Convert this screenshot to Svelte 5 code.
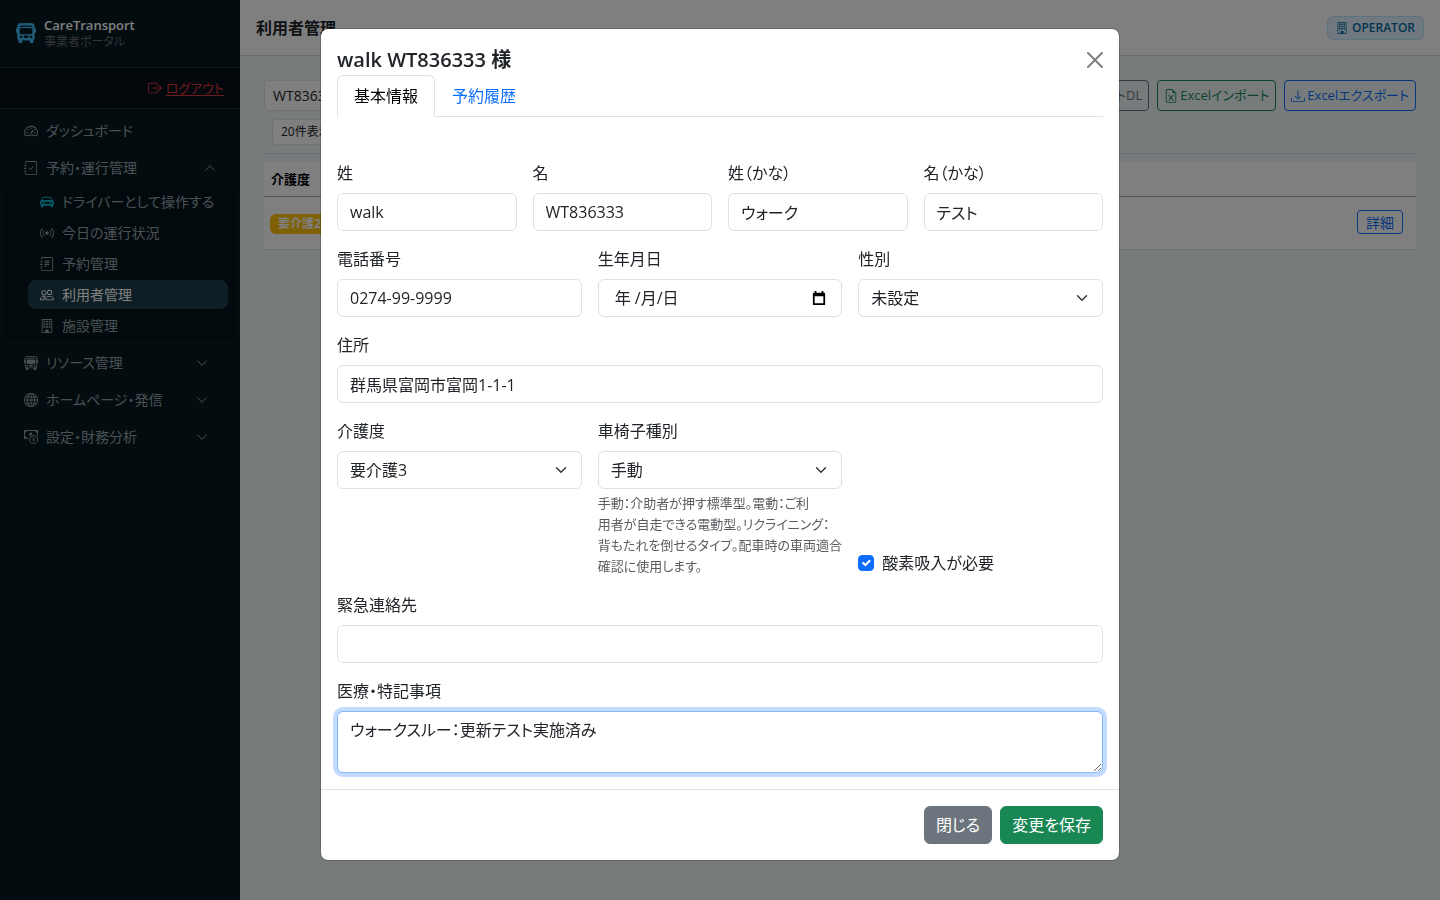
<script lang="ts">
    import { onMount } from 'svelte';

    const journal = [
        'M3 0h10a2 2 0 0 1 2 2v12a2 2 0 0 1-2 2H3a2 2 0 0 1-2-2v-1h1v1a1 1 0 0 0 1 1h10a1 1 0 0 0 1-1V2a1 1 0 0 0-1-1H3a1 1 0 0 0-1 1v1H1V2a2 2 0 0 1 2-2',
        'M1 5v-.5a.5.5 0 0 1 1 0V5h.5a.5.5 0 0 1 0 1h-2a.5.5 0 0 1 0-1zm0 3v-.5a.5.5 0 0 1 1 0V8h.5a.5.5 0 0 1 0 1h-2a.5.5 0 0 1 0-1zm0 3v-.5a.5.5 0 0 1 1 0v.5h.5a.5.5 0 0 1 0 1h-2a.5.5 0 0 1 0-1z'
    ];

    const icons: Record<string, string[]> = {
        busFill: ['M16 7a1 1 0 0 1-1 1v3.5c0 .818-.393 1.544-1 2v2a.5.5 0 0 1-.5.5h-2a.5.5 0 0 1-.5-.5V14H5v1.5a.5.5 0 0 1-.5.5h-2a.5.5 0 0 1-.5-.5v-2a2.5 2.5 0 0 1-1-2V8a1 1 0 0 1-1-1V5a1 1 0 0 1 1-1V2.64C1 1.452 1.845.408 3.064.268A44 44 0 0 1 8 0c2.1 0 3.792.136 4.936.268C14.155.408 15 1.452 15 2.64V4a1 1 0 0 1 1 1zM3.552 3.22A43 43 0 0 1 8 3c1.837 0 3.353.107 4.448.22a.5.5 0 0 0 .104-.994A44 44 0 0 0 8 2c-1.876 0-3.426.109-4.552.226a.5.5 0 1 0 .104.994M8 4c-1.876 0-3.426.109-4.552.226A.5.5 0 0 0 3 4.723v3.554a.5.5 0 0 0 .448.497C4.574 8.891 6.124 9 8 9s3.426-.109 4.552-.226A.5.5 0 0 0 13 8.277V4.723a.5.5 0 0 0-.448-.497A44 44 0 0 0 8 4m-3 7a1 1 0 1 0-2 0 1 1 0 0 0 2 0m8 0a1 1 0 1 0-2 0 1 1 0 0 0 2 0m-7 0a1 1 0 0 0 1 1h2a1 1 0 1 0 0-2H7a1 1 0 0 0-1 1'],
        bus: [
            'M5 11a1 1 0 1 1-2 0 1 1 0 0 1 2 0m8 0a1 1 0 1 1-2 0 1 1 0 0 1 2 0m-6-1a1 1 0 1 0 0 2h2a1 1 0 1 0 0-2zm1-6c-1.876 0-3.426.109-4.552.226A.5.5 0 0 0 3 4.723v3.554a.5.5 0 0 0 .448.497C4.574 8.891 6.124 9 8 9s3.426-.109 4.552-.226A.5.5 0 0 0 13 8.277V4.723a.5.5 0 0 0-.448-.497A44 44 0 0 0 8 4m0-1c-1.837 0-3.353.107-4.448.22a.5.5 0 1 1-.104-.994A44 44 0 0 1 8 2c1.876 0 3.426.109 4.552.226a.5.5 0 1 1-.104.994A43 43 0 0 0 8 3',
            'M15 8a1 1 0 0 0 1-1V5a1 1 0 0 0-1-1V2.64c0-1.188-.845-2.232-2.064-2.372A44 44 0 0 0 8 0C5.9 0 4.208.136 3.064.268 1.845.408 1 1.452 1 2.64V4a1 1 0 0 0-1 1v2a1 1 0 0 0 1 1v3.5c0 .818.393 1.544 1 2v2a.5.5 0 0 0 .5.5h2a.5.5 0 0 0 .5-.5V14h6v1.5a.5.5 0 0 0 .5.5h2a.5.5 0 0 0 .5-.5v-2c.607-.456 1-1.182 1-2zM8 1c2.056 0 3.71.134 4.822.261.676.078 1.178.66 1.178 1.379v8.86a1.5 1.5 0 0 1-1.5 1.5h-9A1.5 1.5 0 0 1 2 11.5V2.64c0-.72.502-1.301 1.178-1.379A43 43 0 0 1 8 1'
        ],
        logout: [
            'M10 12.5a.5.5 0 0 1-.5.5h-8a.5.5 0 0 1-.5-.5v-9a.5.5 0 0 1 .5-.5h8a.5.5 0 0 1 .5.5v2a.5.5 0 0 0 1 0v-2A1.5 1.5 0 0 0 9.5 2h-8A1.5 1.5 0 0 0 0 3.5v9A1.5 1.5 0 0 0 1.5 14h8a1.5 1.5 0 0 0 1.5-1.5v-2a.5.5 0 0 0-1 0z',
            'M15.854 8.354a.5.5 0 0 0 0-.708l-3-3a.5.5 0 0 0-.708.708L14.293 7.5H5.5a.5.5 0 0 0 0 1h8.793l-2.147 2.146a.5.5 0 0 0 .708.708z'
        ],
        speed: [
            'M8 4a.5.5 0 0 1 .5.5V6a.5.5 0 0 1-1 0V4.5A.5.5 0 0 1 8 4M3.732 5.732a.5.5 0 0 1 .707 0l.915.914a.5.5 0 1 1-.708.708l-.914-.915a.5.5 0 0 1 0-.707M2 10a.5.5 0 0 1 .5-.5h1.586a.5.5 0 0 1 0 1H2.5A.5.5 0 0 1 2 10m9.5 0a.5.5 0 0 1 .5-.5h1.5a.5.5 0 0 1 0 1H12a.5.5 0 0 1-.5-.5m.754-4.246a.39.39 0 0 0-.527-.02L7.547 9.31a.91.91 0 1 0 1.302 1.258l3.434-4.297a.39.39 0 0 0-.029-.518z',
            'M0 10a8 8 0 1 1 15.547 2.661c-.442 1.253-1.845 1.602-2.932 1.25C11.309 13.488 9.475 13 8 13c-1.474 0-3.31.488-4.615.911-1.087.352-2.49.003-2.932-1.25A8 8 0 0 1 0 10m8-7a7 7 0 0 0-6.603 9.329c.203.575.923.876 1.68.63C4.397 12.533 6.358 12 8 12s3.604.532 4.923.96c.757.245 1.477-.056 1.68-.631A7 7 0 0 0 8 3'
        ],
        journalCheck: [...journal, 'M10.854 6.146a.5.5 0 0 1 0 .708l-3 3a.5.5 0 0 1-.708 0l-1.5-1.5a.5.5 0 1 1 .708-.708L7.5 8.793l2.646-2.647a.5.5 0 0 1 .708 0'],
        journalText: [...journal, 'M5 10.5a.5.5 0 0 1 .5-.5h2a.5.5 0 0 1 0 1h-2a.5.5 0 0 1-.5-.5m0-2a.5.5 0 0 1 .5-.5h5a.5.5 0 0 1 0 1h-5a.5.5 0 0 1-.5-.5m0-2a.5.5 0 0 1 .5-.5h5a.5.5 0 0 1 0 1h-5a.5.5 0 0 1-.5-.5m0-2a.5.5 0 0 1 .5-.5h5a.5.5 0 0 1 0 1h-5a.5.5 0 0 1-.5-.5'],
        car: ['M2.52 3.515A2.5 2.5 0 0 1 4.82 2h6.362c1 0 1.904.596 2.298 1.515l.792 1.848c.075.175.21.319.38.404.5.25.855.715.965 1.262l.335 1.679q.05.242.049.49v.413c0 .814-.39 1.543-1 1.997V13.5a.5.5 0 0 1-.5.5h-2a.5.5 0 0 1-.5-.5v-1.338c-1.292.048-2.745.088-4 .088s-2.708-.04-4-.088V13.5a.5.5 0 0 1-.5.5h-2a.5.5 0 0 1-.5-.5v-1.892c-.61-.454-1-1.183-1-1.997v-.413a2.5 2.5 0 0 1 .049-.49l.335-1.68c.11-.546.465-1.012.964-1.261a.8.8 0 0 0 .381-.404l.792-1.848ZM3 10a1 1 0 1 0 0-2 1 1 0 0 0 0 2m10 0a1 1 0 1 0 0-2 1 1 0 0 0 0 2M6 8a1 1 0 0 0 0 2h4a1 1 0 1 0 0-2zM2.906 5.189a.51.51 0 0 0 .497.731c.91-.073 3.35-.17 4.597-.17s3.688.097 4.597.17a.51.51 0 0 0 .497-.731l-.956-1.913A.5.5 0 0 0 11.691 3H4.309a.5.5 0 0 0-.447.276L2.906 5.19Z'],
        broadcast: ['M3.05 3.05a7 7 0 0 0 0 9.9.5.5 0 0 1-.707.707 8 8 0 0 1 0-11.314.5.5 0 0 1 .707.707m2.122 2.122a4 4 0 0 0 0 5.656.5.5 0 1 1-.708.708 5 5 0 0 1 0-7.072.5.5 0 0 1 .708.708m5.656-.708a.5.5 0 0 1 .708 0 5 5 0 0 1 0 7.072.5.5 0 1 1-.708-.708 4 4 0 0 0 0-5.656.5.5 0 0 1 0-.708m2.122-2.12a.5.5 0 0 1 .707 0 8 8 0 0 1 0 11.313.5.5 0 0 1-.707-.707 7 7 0 0 0 0-9.9.5.5 0 0 1 0-.707zM10 8a2 2 0 1 1-4 0 2 2 0 0 1 4 0'],
        people: ['M15 14s1 0 1-1-1-4-5-4-5 3-5 4 1 1 1 1zm-7.978-1L7 12.996c.001-.264.167-1.03.76-1.72C8.312 10.629 9.282 10 11 10c1.717 0 2.687.63 3.24 1.276.593.69.758 1.457.76 1.72l-.008.002-.014.002zM11 7a2 2 0 1 0 0-4 2 2 0 0 0 0 4m3-2a3 3 0 1 1-6 0 3 3 0 0 1 6 0M6.936 9.28a6 6 0 0 0-1.23-.247A7 7 0 0 0 5 9c-4 0-5 3-5 4q0 1 1 1h4.216A2.24 2.24 0 0 1 5 13c0-1.01.377-2.042 1.09-2.904.243-.294.526-.569.846-.816M4.92 10A5.5 5.5 0 0 0 4 13H1c0-.26.164-1.03.76-1.724.545-.636 1.492-1.256 3.16-1.275ZM1.5 5.5a3 3 0 1 1 6 0 3 3 0 0 1-6 0m3-2a2 2 0 1 0 0 4 2 2 0 0 0 0-4'],
        building: [
            'M4 2h2v2H4zM7 2h2v2H7zM10 2h2v2h-2zM4 5h2v2H4zM7 5h2v2H7zM10 5h2v2h-2zM4 8h2v2H4zM7 8h2v2H7zM10 8h2v2h-2z',
            'M2 1a1 1 0 0 1 1-1h10a1 1 0 0 1 1 1v14a1 1 0 0 1-1 1H3a1 1 0 0 1-1-1zm11 0H3v14h3v-2.5a.5.5 0 0 1 .5-.5h3a.5.5 0 0 1 .5.5V15h3z'
        ],
        globe: ['M0 8a8 8 0 1 1 16 0A8 8 0 0 1 0 8m7.5-6.923c-.67.204-1.335.82-1.887 1.855A8 8 0 0 0 5.145 4H7.5zM4.09 4a9.3 9.3 0 0 1 .64-1.539 7 7 0 0 1 .597-.933A7.03 7.03 0 0 0 2.255 4zm-.582 3.5c.03-.877.138-1.718.312-2.5H1.674a7 7 0 0 0-.656 2.5zM4.847 5a12.5 12.5 0 0 0-.338 2.5H7.5V5zM8.5 5v2.5h2.99a12.5 12.5 0 0 0-.337-2.5zM4.51 8.5a12.5 12.5 0 0 0 .337 2.5H7.5V8.5zm3.99 0V11h2.653c.187-.765.306-1.608.338-2.5zM5.145 12q.208.58.468 1.068c.552 1.035 1.218 1.65 1.887 1.855V12zm.182 2.472a7 7 0 0 1-.597-.933A9.3 9.3 0 0 1 4.09 12H2.255a7 7 0 0 0 3.072 2.472M3.82 11a13.7 13.7 0 0 1-.312-2.5h-2.49c.062.89.291 1.733.656 2.5zm6.853 3.472A7 7 0 0 0 13.745 12H11.91a9.3 9.3 0 0 1-.64 1.539 7 7 0 0 1-.597.933M8.5 12v2.923c.67-.204 1.335-.82 1.887-1.855q.26-.487.468-1.068zm3.68-1h2.146c.365-.767.594-1.61.656-2.5h-2.49a13.7 13.7 0 0 1-.312 2.5m2.802-3.5a7 7 0 0 0-.656-2.5H12.18c.174.782.282 1.623.312 2.5zM11.27 2.461c.247.464.462.98.64 1.539h1.835a7 7 0 0 0-3.072-2.472c.218.284.418.598.597.933M10.855 4a8 8 0 0 0-.468-1.068C9.835 1.897 9.17 1.282 8.5 1.077V4z'],
        cash: [
            'M11 15a4 4 0 1 0 0-8 4 4 0 0 0 0 8m5-4a5 5 0 1 1-10 0 5 5 0 0 1 10 0',
            'M9.438 11.944c.047.596.518 1.06 1.363 1.116v.44h.375v-.443c.875-.061 1.386-.529 1.386-1.207 0-.618-.39-.936-1.09-1.1l-.296-.07v-1.2c.376.043.614.248.671.532h.658c-.047-.575-.54-1.024-1.329-1.073V8.5h-.375v.45c-.747.073-1.255.522-1.255 1.158 0 .562.378.92 1.007 1.066l.248.061v1.272c-.384-.058-.639-.27-.696-.563h-.668zm1.36-1.354c-.369-.085-.569-.26-.569-.522 0-.294.216-.514.572-.578v1.1zm.432.746c.449.104.655.272.655.569 0 .339-.257.571-.709.614v-1.195z',
            'M1 0a1 1 0 0 0-1 1v8a1 1 0 0 0 1 1h4.083q.088-.517.258-1H3a2 2 0 0 0-2-2V3a2 2 0 0 0 2-2h10a2 2 0 0 0 2 2v3.528c.38.34.717.728 1 1.154V1a1 1 0 0 0-1-1z',
            'M9.998 5.083 10 5a2 2 0 1 0-3.132 1.65 6 6 0 0 1 3.13-1.567'
        ],
        up: ['M7.646 4.646a.5.5 0 0 1 .708 0l6 6a.5.5 0 0 1-.708.708L8 5.707l-5.646 5.647a.5.5 0 0 1-.708-.708z'],
        down: ['M1.646 4.646a.5.5 0 0 1 .708 0L8 10.293l5.646-5.647a.5.5 0 0 1 .708.708l-6 6a.5.5 0 0 1-.708 0l-6-6a.5.5 0 0 1 0-.708'],
        excel: [
            'M5.884 6.68a.5.5 0 1 0-.768.64L7.349 10l-2.233 2.68a.5.5 0 0 0 .768.64L8 10.781l2.116 2.54a.5.5 0 0 0 .768-.641L8.651 10l2.233-2.68a.5.5 0 0 0-.768-.64L8 9.219l-2.116-2.54z',
            'M14 14V4.5L9.5 0H4a2 2 0 0 0-2 2v12a2 2 0 0 0 2 2h8a2 2 0 0 0 2-2M9.5 3A1.5 1.5 0 0 0 11 4.5h2V14a1 1 0 0 1-1 1H4a1 1 0 0 1-1-1V2a1 1 0 0 1 1-1h5.5z'
        ],
        download: [
            'M.5 9.9a.5.5 0 0 1 .5.5v2.5a1 1 0 0 0 1 1h12a1 1 0 0 0 1-1v-2.5a.5.5 0 0 1 1 0v2.5a2 2 0 0 1-2 2H2a2 2 0 0 1-2-2v-2.5a.5.5 0 0 1 .5-.5',
            'M7.646 11.854a.5.5 0 0 0 .708 0l3-3a.5.5 0 0 0-.708-.708L8.5 10.293V1.5a.5.5 0 0 0-1 0v8.793L5.354 8.146a.5.5 0 1 0-.708.708z'
        ],
        close: ['M.293.293a1 1 0 0 1 1.414 0L8 6.586 14.293.293a1 1 0 1 1 1.414 1.414L9.414 8l6.293 6.293a1 1 0 0 1-1.414 1.414L8 9.414l-6.293 6.293a1 1 0 0 1-1.414-1.414L6.586 8 .293 1.707a1 1 0 0 1 0-1.414'],
        calendar: ['M3 0h2v2h6V0h2v2h1a1 1 0 0 1 1 1v12a1 1 0 0 1-1 1H2a1 1 0 0 1-1-1V3a1 1 0 0 1 1-1h1zM3 6v8h10V6z']
    };

    const subItems = [
        { icon: 'car', label: 'ドライバーとして操作する', accent: true },
        { icon: 'broadcast', label: '今日の運行状況' },
        { icon: 'journalText', label: '予約管理' },
        { icon: 'people', label: '利用者管理', active: true },
        { icon: 'building', label: '施設管理' }
    ];

    const groups = [
        { icon: 'bus', label: 'リソース管理' },
        { icon: 'globe', label: 'ホームページ・発信' },
        { icon: 'cash', label: '設定・財務分析' }
    ];

    let user = $state({
        lastName: 'walk',
        firstName: 'WT836333',
        lastKana: 'ウォーク',
        firstKana: 'テスト',
        phone: '0274-99-9999',
        birthday: '',
        gender: '未設定',
        address: '群馬県富岡市富岡1-1-1',
        careLevel: '要介護3',
        wheelchair: '手動',
        oxygen: true,
        emergency: '',
        notes: 'ウォークスルー：更新テスト実施済み'
    });

    let search = $state('WT836333');
    let open = $state(true);
    let tab = $state('info');
    let notesField: HTMLTextAreaElement;

    onMount(() => notesField.focus());
</script>

{#snippet icon(name: string, size = 14)}
    <svg class="icon" width={size} height={size} viewBox="0 0 16 16" fill="currentColor" fill-rule="evenodd" aria-hidden="true">
        {#each icons[name] as d}
            <path {d} />
        {/each}
    </svg>
{/snippet}

<div class="app">
    <aside class="sidebar">
        <div class="brand">
            {@render icon('busFill', 20)}
            <div>
                <div class="name">CareTransport</div>
                <div class="portal">事業者ポータル</div>
            </div>
        </div>
        <div class="logout">
            {@render icon('logout')}
            <a href="#logout">ログアウト</a>
        </div>
        <nav>
            <a class="item" href="#dashboard">{@render icon('speed')}<span>ダッシュボード</span></a>
            <button class="item opened">
                {@render icon('journalCheck')}<span>予約・運行管理</span>{@render icon('up', 12)}
            </button>
            <div class="sub">
                {#each subItems as item}
                    <a href="#sub" class:active={item.active} class:accent={item.accent}>
                        {@render icon(item.icon)}<span>{item.label}</span>
                    </a>
                {/each}
            </div>
            {#each groups as group}
                <button class="item">
                    {@render icon(group.icon)}<span>{group.label}</span>{@render icon('down', 12)}
                </button>
            {/each}
        </nav>
    </aside>

    <div class="page">
        <header class="topbar">
            <h1>利用者管理</h1>
            <span class="role">{@render icon('building', 12)}OPERATOR</span>
        </header>
        <main>
            <div class="tools">
                <input class="search" aria-label="検索" bind:value={search} />
                <div class="actions">
                    <button class="outline grey">テンプレートDL</button>
                    <button class="outline green">{@render icon('excel')}Excelインポート</button>
                    <button class="outline blue">{@render icon('download')}Excelエクスポート</button>
                </div>
            </div>
            <div class="paging">
                <select aria-label="表示件数">
                    <option>20件表示</option>
                </select>
            </div>
            <table>
                <thead>
                    <tr><th>介護度</th><th></th></tr>
                </thead>
                <tbody>
                    <tr>
                        <td><span class="level">要介護2</span></td>
                        <td class="end"><button class="outline blue small">詳細</button></td>
                    </tr>
                </tbody>
            </table>
        </main>
    </div>
</div>

{#if open}
    <div class="backdrop">
        <div class="modal" role="dialog" aria-labelledby="modal-title">
            <div class="head">
                <h2 id="modal-title">walk WT836333 様</h2>
                <button class="close" aria-label="閉じる" onclick={() => (open = false)}>{@render icon('close', 16)}</button>
            </div>
            <div class="tabs">
                <button class:current={tab === 'info'} onclick={() => (tab = 'info')}>基本情報</button>
                <button class:current={tab === 'history'} onclick={() => (tab = 'history')}>予約履歴</button>
            </div>
            <form class="body">
                <div class="row four">
                    <div class="field">
                        <label for="last-name">姓</label>
                        <input id="last-name" bind:value={user.lastName} />
                    </div>
                    <div class="field">
                        <label for="first-name">名</label>
                        <input id="first-name" bind:value={user.firstName} />
                    </div>
                    <div class="field">
                        <label for="last-kana">姓（かな）</label>
                        <input id="last-kana" bind:value={user.lastKana} />
                    </div>
                    <div class="field">
                        <label for="first-kana">名（かな）</label>
                        <input id="first-kana" bind:value={user.firstKana} />
                    </div>
                </div>
                <div class="row three">
                    <div class="field">
                        <label for="phone">電話番号</label>
                        <input id="phone" type="tel" bind:value={user.phone} />
                    </div>
                    <div class="field">
                        <label for="birthday">生年月日</label>
                        <div class="date">
                            <input id="birthday" placeholder="年 /月/日" bind:value={user.birthday} />
                            <button type="button" aria-label="カレンダー">{@render icon('calendar', 14)}</button>
                        </div>
                    </div>
                    <div class="field">
                        <label for="gender">性別</label>
                        <select id="gender" bind:value={user.gender}>
                            <option>未設定</option>
                            <option>男性</option>
                            <option>女性</option>
                        </select>
                    </div>
                </div>
                <div class="field">
                    <label for="address">住所</label>
                    <input id="address" bind:value={user.address} />
                </div>
                <div class="row three">
                    <div class="field">
                        <label for="care-level">介護度</label>
                        <select id="care-level" bind:value={user.careLevel}>
                            <option>要介護1</option>
                            <option>要介護2</option>
                            <option>要介護3</option>
                        </select>
                    </div>
                    <div class="field">
                        <label for="wheelchair">車椅子種別</label>
                        <select id="wheelchair" bind:value={user.wheelchair}>
                            <option>手動</option>
                            <option>電動</option>
                            <option>リクライニング</option>
                        </select>
                        <p class="hint">
                            手動：介助者が押す標準型。電動：ご利<br />
                            用者が自走できる電動型。リクライニング：<br />
                            背もたれを倒せるタイプ。配車時の車両適合<br />
                            確認に使用します。
                        </p>
                    </div>
                    <div class="check">
                        <input id="oxygen" type="checkbox" bind:checked={user.oxygen} />
                        <label for="oxygen">酸素吸入が必要</label>
                    </div>
                </div>
                <div class="field">
                    <label for="emergency">緊急連絡先</label>
                    <input id="emergency" bind:value={user.emergency} />
                </div>
                <div class="field">
                    <label for="notes">医療・特記事項</label>
                    <textarea id="notes" rows="2" bind:this={notesField} bind:value={user.notes}></textarea>
                </div>
            </form>
            <div class="foot">
                <button class="solid" onclick={() => (open = false)}>閉じる</button>
                <button class="solid save">変更を保存</button>
            </div>
        </div>
    </div>
{/if}

<style>
:global(body) {
    margin: 0;
    font-family: "Open Sans", "Noto Sans CJK JP", sans-serif;
    font-size: 16px;
    line-height: 24px;
    font-feature-settings: "palt";
    color: #212529;
    background-color: #eef7f8;
}

* {
    box-sizing: border-box;
}

button, input, select, textarea {
    font: inherit;
    font-feature-settings: inherit;
    color: inherit;
    margin: 0;
}

button {
    cursor: pointer;
}

.icon {
    display: block;
    flex: none;
}

.app {
    display: flex;
    min-height: 100vh;
}

.sidebar {
    flex: none;
    width: 240px;
    background-color: #06191f;
    color: #94a3b8;
    font-size: 14px;
    line-height: 21px;
}

.brand {
    display: flex;
    align-items: center;
    gap: 8px;
    padding: 16px 16px 17px;
    border-bottom: 1px solid #1a2e3c;
    color: #3fb4ee;
}

.brand .name {
    font-size: 13px;
    font-weight: 600;
    line-height: 18px;
    color: #ffffff;
}

.brand .portal {
    font-size: 12px;
    line-height: 16px;
    color: #64686e;
}

.logout {
    display: flex;
    justify-content: flex-end;
    align-items: center;
    gap: 4px;
    height: 41px;
    padding: 0 16px;
    background-color: #041117;
    border-bottom: 1px solid #1a2e3c;
    color: #dc3545;
    font-size: 13px;
}

.logout a {
    color: inherit;
    text-underline-offset: 2px;
}

nav {
    padding-top: 3px;
}

.item {
    display: flex;
    align-items: center;
    gap: 8px;
    width: 100%;
    padding: 8px 32px 8px 24px;
    border: none;
    background: none;
    color: #94a3ab;
    text-align: left;
    text-decoration: none;
}

.item.opened {
    padding-right: 24px;
}

.item span {
    flex: 1;
}

.sub {
    display: flex;
    flex-direction: column;
    gap: 2px;
    margin: 0 4px 4px;
    padding: 1px 8px 0 24px;
    background-color: #07151b;
}

.sub a {
    display: flex;
    align-items: center;
    gap: 8px;
    padding: 4px 12px;
    border-radius: 8px;
    color: #94a3ab;
    text-decoration: none;
}

.sub a.active {
    background-color: #1e3c4b;
    color: #ffffff;
}

.sub a.accent .icon {
    color: #0dafca;
}

.page {
    flex: 1;
    min-width: 0;
}

.topbar {
    display: flex;
    justify-content: space-between;
    align-items: center;
    height: 56px;
    padding: 0 16px;
    background-color: #ffffff;
    border-bottom: 1px solid #cfdde2;
}

h1 {
    margin: 0;
    font-size: 16px;
    font-weight: 600;
}

.role {
    display: flex;
    align-items: center;
    gap: 4px;
    padding: 2px 8px;
    border: 1px solid #bae6fd;
    border-radius: 6px;
    background-color: #e0f2fe;
    color: #0369a1;
    font-size: 12px;
    line-height: 18px;
    font-weight: 600;
}

main {
    padding: 24px;
}

.tools {
    display: flex;
    justify-content: space-between;
}

.search {
    width: 240px;
    height: 31px;
    padding: 4px 8px;
    border: 1px solid #dee2e6;
    border-radius: 4px;
    background-color: #ffffff;
    font-size: 14px;
}

.actions {
    display: flex;
    gap: 8px;
}

.outline {
    display: flex;
    align-items: center;
    gap: 2px;
    height: 31px;
    padding: 0 6px;
    border: 1px solid;
    border-radius: 4px;
    background: none;
    font-size: 13px;
    line-height: 21px;
}

.outline.grey {
    color: #6c757d;
}

.outline.green {
    color: #198754;
}

.outline.blue {
    color: #0d6efd;
}

.outline.small {
    display: inline-flex;
    height: 24px;
    padding: 0 8px;
    font-size: 14px;
}

.paging {
    display: flex;
    padding: 8px;
    border-bottom: 1px solid #d3dfe3;
}

.paging select {
    width: 112px;
    height: 26px;
    padding: 0 8px;
    border: 1px solid #dee2e6;
    border-radius: 4px;
    background-color: #ffffff;
    font-size: 12px;
    line-height: 18px;
    appearance: none;
}

table {
    width: 100%;
    margin-top: 8px;
    border-collapse: collapse;
    background-color: #ffffff;
    font-size: 13px;
}

th {
    height: 34px;
    padding: 0 7px;
    border-bottom: 1px solid #a0a0a0;
    text-align: left;
    font-weight: 600;
    color: #000000;
}

td {
    height: 53px;
    padding: 0 6px;
    border-bottom: 1px solid #dee2e6;
}

td.end {
    padding-right: 13px;
    text-align: right;
}

.level {
    display: inline-block;
    padding: 0 8px;
    border-radius: 6px;
    background-color: #ffc107;
    color: #ffffff;
    font-size: 12px;
    line-height: 20px;
    font-weight: 700;
}

.backdrop {
    position: fixed;
    inset: 0;
    overflow: auto;
    padding: 28px 16px;
    background-color: rgba(0, 0, 0, 0.5);
}

.modal {
    max-width: 800px;
    margin: 0 auto;
    border: 1px solid rgba(0, 0, 0, 0.175);
    border-radius: 8px;
    background-color: #ffffff;
    background-clip: padding-box;
}

.head {
    display: flex;
    justify-content: space-between;
    align-items: center;
    padding: 16px 16px 0;
}

h2 {
    margin: 0;
    font-size: 20px;
    line-height: 30px;
    font-weight: 600;
}

.close {
    padding: 0;
    border: none;
    background: none;
    color: #000000;
    opacity: 0.5;
}

.tabs {
    display: flex;
    margin: 0 16px;
    border-bottom: 1px solid #dee2e6;
}

.tabs button {
    margin-bottom: -1px;
    padding: 8px 16px;
    border: 1px solid transparent;
    border-radius: 6px 6px 0 0;
    background: none;
    color: #0d6efd;
}

.tabs .current {
    border-color: #dee2e6 #dee2e6 #ffffff;
    background-color: #ffffff;
    color: #000000;
}

.body {
    display: flex;
    flex-direction: column;
    gap: 16px;
    padding: 44px 16px 16px;
}

.row {
    display: grid;
    gap: 16px;
}

.four {
    grid-template-columns: repeat(4, 1fr);
}

.three {
    grid-template-columns: repeat(3, 1fr);
}

.field {
    display: flex;
    flex-direction: column;
    min-width: 0;
}

.field label {
    margin-bottom: 8px;
}

.field input, .field select, .field textarea {
    width: 100%;
    height: 38px;
    padding: 6px 12px;
    border: 1px solid #dee2e6;
    border-radius: 6px;
    background-color: #ffffff;
}

.field select {
    padding-right: 36px;
    appearance: none;
    background-image: url("data:image/svg+xml,%3csvg xmlns='http://www.w3.org/2000/svg' viewBox='0 0 16 16'%3e%3cpath fill='none' stroke='%23343a40' stroke-linecap='round' stroke-linejoin='round' stroke-width='2' d='m2 5 6 6 6-6'/%3e%3c/svg%3e");
    background-repeat: no-repeat;
    background-position: right 12px center;
    background-size: 16px 12px;
}

.field textarea {
    display: block;
    height: 62px;
    resize: vertical;
}

.field input:focus, .field select:focus, .field textarea:focus {
    border-color: #86b7fe;
    outline: 0;
    box-shadow: 0 0 0 4px rgba(13, 110, 253, 0.25);
}

.date {
    display: grid;
}

.date input {
    grid-area: 1 / 1;
    padding: 6px 40px 6px 16px;
}

.date input::placeholder {
    color: #212529;
    opacity: 1;
}

.date button {
    grid-area: 1 / 1;
    justify-self: end;
    align-self: center;
    margin-right: 16px;
    padding: 0;
    border: none;
    background: none;
    color: #000000;
}

.hint {
    margin: 4px 0 0;
    font-size: 13px;
    line-height: 21px;
    white-space: nowrap;
    color: rgba(33, 37, 41, 0.75);
}

.check {
    display: flex;
    align-items: center;
    align-self: end;
    gap: 8px;
    padding-bottom: 2px;
}

.check input {
    width: 16px;
    height: 16px;
    border: 1px solid #0d6efd;
    border-radius: 4px;
    appearance: none;
}

.check input:checked {
    background: #0d6efd url("data:image/svg+xml,%3csvg xmlns='http://www.w3.org/2000/svg' viewBox='0 0 20 20'%3e%3cpath fill='none' stroke='%23fff' stroke-linecap='round' stroke-linejoin='round' stroke-width='3' d='m6 10 3 3 6-6'/%3e%3c/svg%3e") center / contain no-repeat;
}

.foot {
    display: flex;
    justify-content: flex-end;
    gap: 8px;
    padding: 16px;
    border-top: 1px solid #dee2e6;
}

.solid {
    padding: 6px 11px;
    border: 1px solid #6c757d;
    border-radius: 6px;
    background-color: #6c757d;
    color: #ffffff;
}

.solid.save {
    border-color: #198754;
    background-color: #198754;
}
</style>
